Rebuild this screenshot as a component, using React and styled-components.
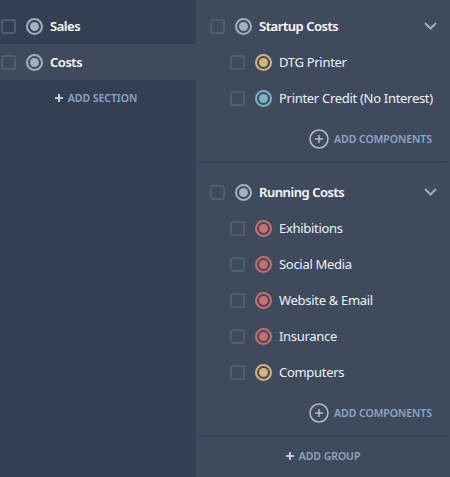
import React from 'react';
import styled, { createGlobalStyle } from 'styled-components';

const GlobalStyle = createGlobalStyle`
  html, body {
    margin: 0;
    padding: 0;
    background: #3f4a5d;
  }
  body {
    font-family: "Noto Sans", "Open Sans", sans-serif;
  }
`;

const colors = {
  grey: '#a3b0c0',
  gold: '#d4b47c',
  blue: '#7fb2c8',
  red: '#c76f6f',
};

const Layout = styled.div`
  display: flex;
  width: 450px;
  height: 477px;
  overflow: hidden;
`;

const Sidebar = styled.div`
  width: 196px;
  flex-shrink: 0;
  padding-top: 8px;
  background: #334053;
`;

const Main = styled.div`
  flex: 1;
  min-width: 0;
  background: #3f4a5d;
`;

const SectionRow = styled.div`
  display: flex;
  align-items: center;
  height: 36px;
  padding-left: 1px;
  background: ${(p) => (p.$active ? '#3f4a5d' : 'transparent')};
`;

const Checkbox = styled.span`
  box-sizing: border-box;
  display: block;
  flex-shrink: 0;
  width: 15px;
  height: 15px;
  border: 2px solid #515c6e;
  border-radius: 3px;
`;

const Dot = styled.span`
  box-sizing: border-box;
  display: flex;
  align-items: center;
  justify-content: center;
  flex-shrink: 0;
  width: 17px;
  height: 17px;
  margin-left: 10px;
  margin-right: 7px;
  border: 2px solid ${(p) => p.$color};
  border-radius: 50%;

  &::after {
    content: '';
    width: 9px;
    height: 9px;
    border-radius: 50%;
    background: ${(p) => p.$color};
  }
`;

const BoldLabel = styled.span`
  font-size: 13px;
  font-weight: 600;
  letter-spacing: -0.45px;
  color: #ffffff;
  white-space: nowrap;
`;

const ItemLabel = styled.span`
  font-size: 13px;
  letter-spacing: -0.3px;
  color: #eef2f6;
  white-space: nowrap;
`;

const AddLink = styled.div`
  display: flex;
  align-items: center;
  justify-content: center;
  gap: 5px;
  height: 36px;
  padding-right: ${(p) => p.$inset || 0}px;
  font-size: 10.5px;
  font-weight: 600;
  letter-spacing: -0.05px;
  color: #8ea6c4;
  white-space: nowrap;
`;

const PlusMark = styled.svg`
  width: 8px;
  height: 8px;
  fill: none;
  stroke: #c3cbd6;
  stroke-width: 2;
`;

const Group = styled.div`
  margin: 0 3px;
  padding-top: ${(p) => (p.$first ? '8px' : '11px')};
  border-bottom: 2px solid #354154;
`;

const GroupHeader = styled.div`
  display: flex;
  align-items: center;
  height: 36px;
  padding-left: 11px;
  padding-right: 10px;
`;

const Chevron = styled.svg`
  width: 13px;
  height: 8px;
  margin-left: auto;
  fill: none;
  stroke: #a3adba;
  stroke-width: 2;
`;

const ItemRow = styled.div`
  display: flex;
  align-items: center;
  height: 36px;
  padding-left: 31px;
`;

const GroupFooter = styled.div`
  display: flex;
  align-items: center;
  justify-content: flex-end;
  box-sizing: border-box;
  height: 45px;
  padding: 1px 15px 0 0;
  gap: 5px;
`;

const CirclePlus = styled.svg`
  width: 20px;
  height: 20px;
  fill: none;
  stroke: #b7bfca;
`;

const FooterText = styled.span`
  font-size: 10.5px;
  font-weight: 600;
  letter-spacing: -0.05px;
  color: #8ea6c4;
  white-space: nowrap;
`;

const AddGroupRow = styled(AddLink)`
  height: 38px;
`;

const groups = [
  {
    name: 'Startup Costs',
    items: [
      { name: 'DTG Printer', color: colors.gold },
      { name: 'Printer Credit (No Interest)', color: colors.blue },
    ],
  },
  {
    name: 'Running Costs',
    items: [
      { name: 'Exhibitions', color: colors.red },
      { name: 'Social Media', color: colors.red },
      { name: 'Website & Email', color: colors.red },
      { name: 'Insurance', color: colors.red },
      { name: 'Computers', color: colors.gold },
    ],
  },
];

const Plus = () => (
  <PlusMark viewBox="0 0 8 8">
    <path d="M0 4h8M4 0v8" />
  </PlusMark>
);

const App = () => (
  <Layout>
    <GlobalStyle />
    <Sidebar>
      <SectionRow>
        <Checkbox />
        <Dot $color={colors.grey} />
        <BoldLabel>Sales</BoldLabel>
      </SectionRow>
      <SectionRow $active>
        <Checkbox />
        <Dot $color={colors.grey} />
        <BoldLabel>Costs</BoldLabel>
      </SectionRow>
      <AddLink $inset={4}>
        <Plus />
        ADD SECTION
      </AddLink>
    </Sidebar>
    <Main>
      {groups.map((group, i) => (
        <Group key={group.name} $first={i === 0}>
          <GroupHeader>
            <Checkbox />
            <Dot $color={colors.grey} />
            <BoldLabel>{group.name}</BoldLabel>
            <Chevron viewBox="0 0 13 8">
              <path d="M1 1l5.5 5.5L12 1" />
            </Chevron>
          </GroupHeader>
          {group.items.map((item) => (
            <ItemRow key={item.name}>
              <Checkbox />
              <Dot $color={item.color} />
              <ItemLabel>{item.name}</ItemLabel>
            </ItemRow>
          ))}
          <GroupFooter>
            <CirclePlus viewBox="0 0 20 20">
              <circle cx="10" cy="10" r="9" strokeWidth="1.5" />
              <path d="M6 10h8M10 6v8" strokeWidth="1.5" />
            </CirclePlus>
            <FooterText>ADD COMPONENTS</FooterText>
          </GroupFooter>
        </Group>
      ))}
      <AddGroupRow>
        <Plus />
        ADD GROUP
      </AddGroupRow>
    </Main>
  </Layout>
);

export default App;
